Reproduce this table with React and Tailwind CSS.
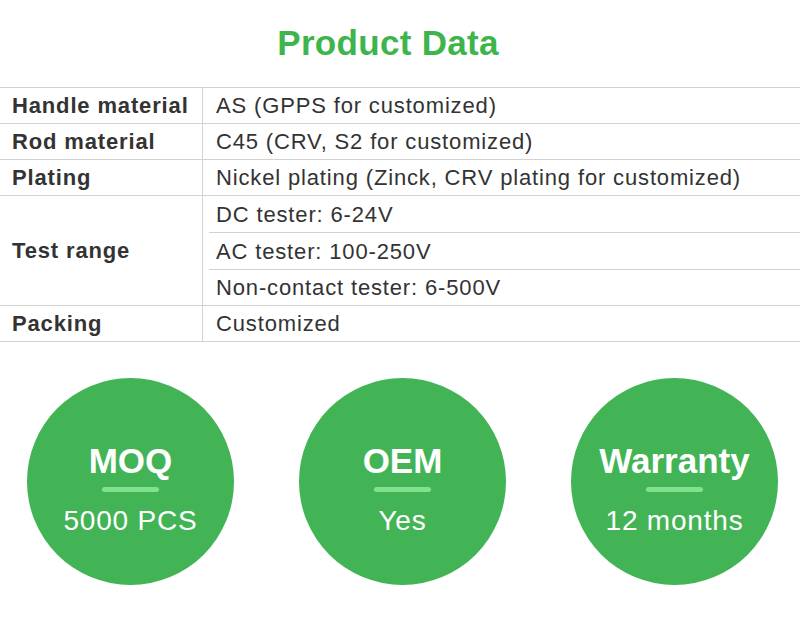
export default function App() {
  const font = { fontFamily: '"Liberation Sans", Arial, sans-serif' };
  const rows = [
    ["Handle material", ["AS (GPPS for customized)"]],
    ["Rod material", ["C45 (CRV, S2 for customized)"]],
    ["Plating", ["Nickel plating (Zinck, CRV plating for customized)"]],
    ["Test range", ["DC tester: 6-24V", "AC tester: 100-250V", "Non-contact tester: 6-500V"]],
    ["Packing", ["Customized"]],
  ];
  const circles = [
    ["MOQ", "5000 PCS"],
    ["OEM", "Yes"],
    ["Warranty", "12 months"],
  ];
  return (
    <div className="w-[800px] h-[637px] bg-white overflow-hidden" style={font}>
      <div className="h-[86px] flex items-center justify-center pr-[24px]">
        <h1 className="text-[35px] leading-[40px] font-bold text-[#3db54c] tracking-[0.3px]">Product Data</h1>
      </div>
      <div className="border-t border-[#d2d2d2] mt-px text-[22px] tracking-[0.85px] text-[#333333]">
        {rows.map(([label, values]) => (
          <div key={label} className="flex border-b border-[#d2d2d2]">
            <div className="w-[203px] shrink-0 border-r border-[#d2d2d2] pl-[12px] flex items-center font-bold">
              {label}
            </div>
            <div className="flex-1 flex flex-col">
              {values.map((v, i) => (
                <div
                  key={v}
                  className={
                    values.length > 1 && i < values.length - 1
                      ? "h-[37px] ml-[6px] pl-[7px] flex items-center border-b border-[#d2d2d2]"
                      : values.length > 1
                      ? "h-[35px] ml-[6px] pl-[7px] flex items-center"
                      : "h-[35px] pl-[13px] flex items-center"
                  }
                >
                  {v}
                </div>
              ))}
            </div>
          </div>
        ))}
      </div>
      <div className="flex pl-[27px] gap-[65px] mt-[36px]">
        {circles.map(([t, v]) => (
          <div key={t} className="w-[207px] h-[207px] rounded-full bg-[#42b455] flex flex-col items-center pt-[65px] text-white">
            <div className="text-[35px] leading-[35px] font-bold">{t}</div>
            <div className="w-[57px] h-[5px] rounded-full bg-[#80e28f] mt-[9px]"></div>
            <div className="text-[28px] leading-[28px] tracking-[0.8px] mt-[15px]">{v}</div>
          </div>
        ))}
      </div>
    </div>
  );
}
